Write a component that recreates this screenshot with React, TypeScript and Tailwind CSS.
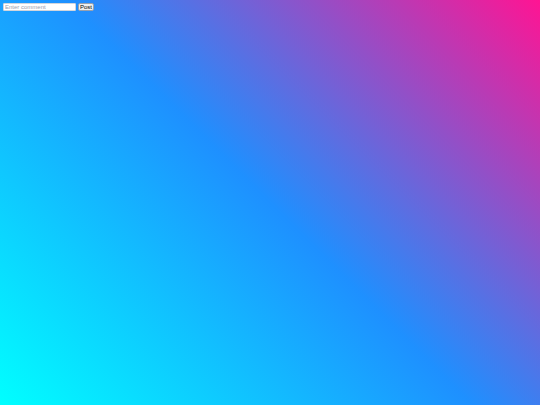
export default function App() {
  return (
    <div className="w-[540px] h-[405px] bg-[linear-gradient(45deg,#00ffff,#1e90ff,#ff1493)] p-[3px] flex items-start gap-[2px] font-['Liberation_Sans',sans-serif]">
      <input
        type="text"
        placeholder="Enter comment"
        className="w-[73px] h-[8px] bg-white border-[0.5px] border-gray-300 rounded-[1px] px-[1px] text-[6px] leading-none text-black placeholder:text-gray-400 outline-none"
      />
      <button className="w-[16px] h-[8px] bg-[#efefef] border-[0.5px] border-gray-400 rounded-[2px] text-[6px] leading-none text-black flex items-center justify-center">
        Post
      </button>
    </div>
  );
}
